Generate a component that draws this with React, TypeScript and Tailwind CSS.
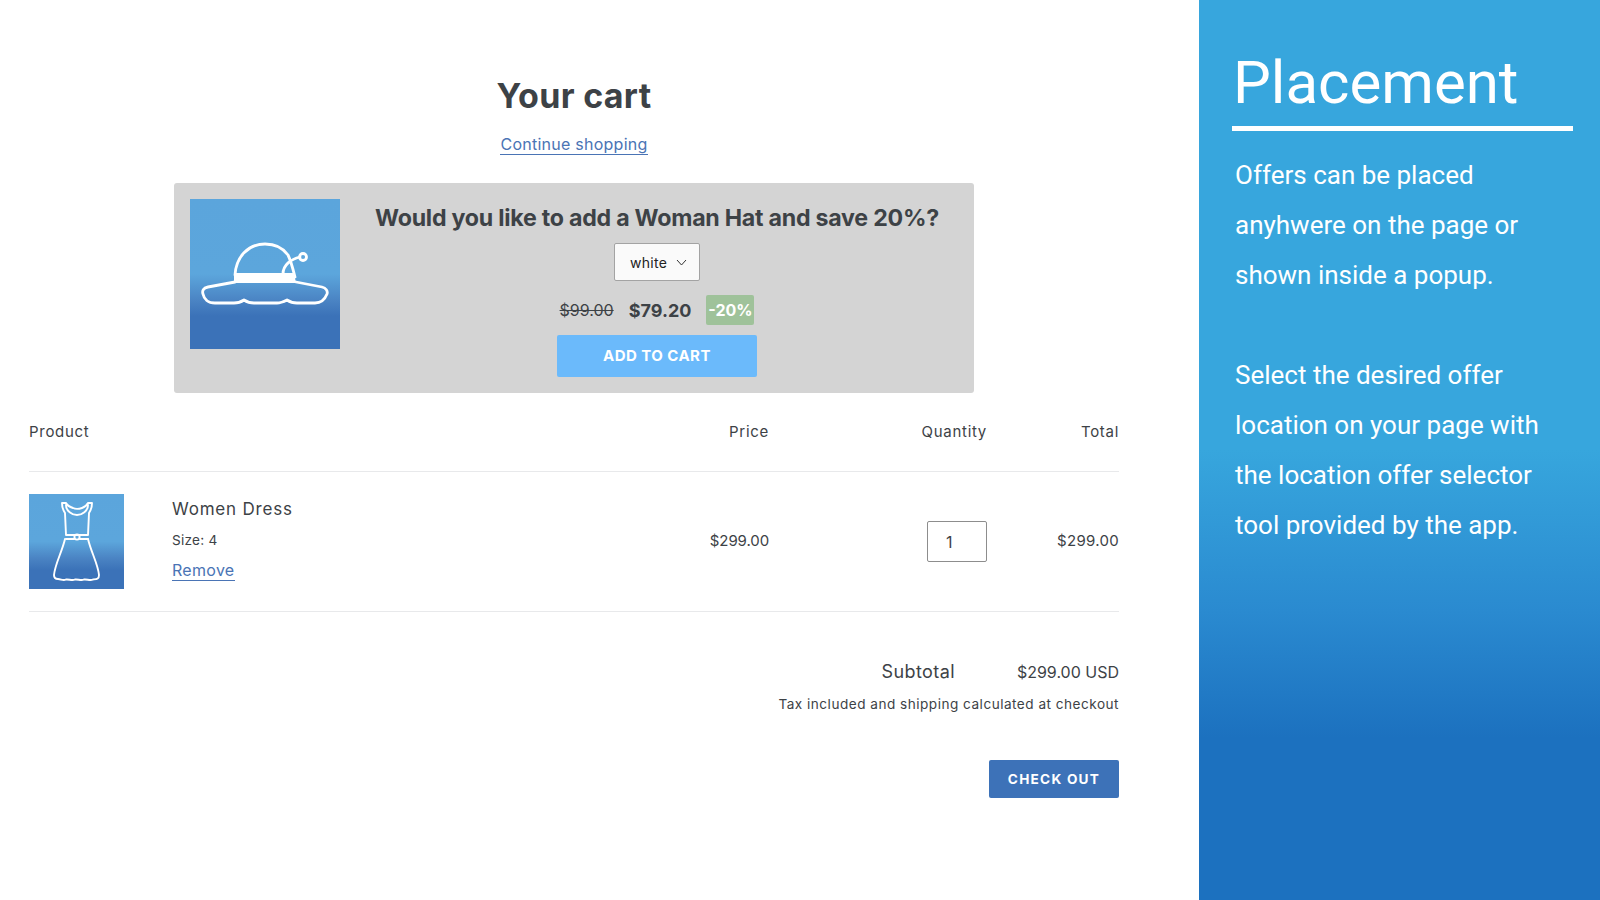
const body = { fontFamily: '"Inter", "Liberation Sans", sans-serif' };

function Hat() {
  return (
    <svg viewBox="0 0 150 150" className="w-full h-full" fill="none" stroke="white" strokeWidth="2.8" strokeLinecap="round" strokeLinejoin="round">
      <path d="M45 76 C46 58 58 45 75 45 C85 45 93 49 98 56 C101 62 103 70 105 78" />
      <path d="M93 75 C93 66 101 60 110 58" />
      <path d="M45 83 L18 88 C13 89 12 92 13 95 C14 100 18 104 25 104 L44 104 C48 104 51 103 54 101 C57 103 60 104 64 104 L87 104 C90 104 93 103 97 101 C100 103 103 104 107 104 L125 104 C131 104 135 100 137 95 C138 92 136 89 132 88 L106 83" />
      <path d="M44 74 H104 L106 84 H44 Z" fill="white" stroke="none" />
      <circle cx="113" cy="58" r="3.5" />
    </svg>
  );
}

function Dress() {
  return (
    <svg viewBox="0 0 95 95" className="w-full h-full" fill="none" stroke="white" strokeWidth="1.9" strokeLinecap="round" strokeLinejoin="round">
      <path d="M33 9 L37 9 C38 11 41 13 44 14 C46 15 50 15 53 14 C56 13 58 11 59 9 L63 9 C63 13 62 16 60 19 L59 41 L37 41 L36 19 C34 16 33 13 33 9 Z" />
      <path d="M37 11 C37 17 43 21 48 21 C53 21 59 17 59 11" />
      <path d="M37 45 H45 M51 45 H59" />
      <circle cx="48" cy="43" r="2.6" />
      <path d="M36 45 C33 58 26 70 25 81 C25 84 26 85 29 85 C32 85 34 87 37 85.5 C40 85 43 87 46 85.5 C49 85 52 87 55 85.5 C58 85 61 87 64 85.5 C68 85 70 85 70 81 C69 70 62 58 59 45" />
    </svg>
  );
}

export default function App() {
  return (
    <div className="flex h-[900px] w-[1600px] overflow-hidden bg-white" style={body}>
      <main className="w-[1199px] pl-[29px] pr-[80px] flex flex-col">
        <h1 className="mt-[75px] text-center text-[34px] leading-[41px] font-bold text-[#3d4246] tracking-[0.3px]">Your cart</h1>
        <div className="mt-[16px] text-center text-[16px] leading-[24px]">
          <a className="text-[#4a74b5] border-b border-[#4a74b5] tracking-[0.25px]">Continue shopping</a>
        </div>
        <section className="ml-[145px] mt-[27px] w-[800px] h-[210px] rounded-[3px] bg-[#d4d4d4] p-[16px] flex">
          <div className="w-[150px] h-[150px] shrink-0 bg-[linear-gradient(180deg,#5ba5dc_0%,#5ca6dc_50%,#4a83c3_68%,#3b72b8_78%,#3b72b8_100%)]">
            <Hat />
          </div>
          <div className="flex-1 pl-[16px] flex flex-col items-center">
            <h2 className="mt-[4px] text-[23.2px] leading-[30px] font-bold text-[#3d4246] tracking-[-0.25px] whitespace-nowrap">Would you like to add a Woman Hat and save 20%?</h2>
            <div className="mt-[10px] w-[86px] h-[38px] rounded-[2px] border border-[#a3a3a3] bg-[#fafafa] flex items-center pl-[15px] gap-[9px] text-[14px] text-[#222]">
              <span className="tracking-[0.3px]">white</span>
              <svg width="11" height="7" viewBox="0 0 11 7" fill="none" stroke="#333" strokeWidth="1"><path d="M1 1 L5.5 6 L10 1" /></svg>
            </div>
            <div className="mt-[14px] flex items-center h-[30px]">
              <span className="text-[16px] line-through text-[#3d4246]">$99.00</span>
              <span className="ml-[15px] text-[18px] font-bold text-[#3d4246]">$79.20</span>
              <span className="ml-[15px] w-[48px] h-[30px] rounded-[2px] bg-[#9fc29a] text-white text-[16px] font-bold flex items-center justify-center">-20%</span>
            </div>
            <div className="mt-[10px] w-[200px] h-[42px] rounded-[2px] bg-[#6bbafb] text-white text-[15px] font-bold flex items-center justify-center tracking-[0.45px]">ADD TO CART</div>
          </div>
        </section>
        <div className="mt-[28px] flex text-[15px] leading-[22px] text-[#3d4246] tracking-[0.7px]">
          <span className="w-[475px]">Product</span>
          <span className="w-[265px] text-right">Price</span>
          <span className="w-[218px] text-right">Quantity</span>
          <span className="flex-1 text-right">Total</span>
        </div>
        <div className="mt-[28px] border-t border-[#e8e9eb] pt-[22px] pb-[22px] flex items-center border-b">
          <div className="w-[95px] h-[95px] shrink-0 bg-[linear-gradient(180deg,#5ba5dc_0%,#5ca6dc_50%,#4a83c3_68%,#3b72b8_80%,#3b72b8_100%)]">
            <Dress />
          </div>
          <div className="ml-[48px] w-[332px] flex flex-col h-[95px]">
            <div className="mt-[3px] text-[17px] leading-[24px] text-[#3d4246] tracking-[0.8px]">Women Dress</div>
            <div className="mt-[9px] text-[13.6px] leading-[20px] text-[#3d4246] tracking-[0.25px]">Size: 4</div>
            <div className="mt-[10px] text-[16px] leading-[21px]"><a className="text-[#4a74b5] border-b border-[#4a74b5] tracking-[0.3px]">Remove</a></div>
          </div>
          <div className="w-[265px] text-right text-[15px] text-[#3d4246] tracking-[-0.1px]">$299.00</div>
          <div className="w-[218px] flex justify-end">
            <div className="w-[60px] h-[41px] rounded-[2px] border border-[#8d8d8d] flex items-center pl-[18px] text-[16px] text-[#3d4246]">1</div>
          </div>
          <div className="flex-1 text-right text-[15px] text-[#3d4246] tracking-[0.3px]">$299.00</div>
        </div>
        <div className="mt-[47px] flex justify-end items-center text-[#3d4246]">
          <span className="text-[18px] leading-[26px] tracking-[0.4px]">Subtotal</span>
          <span className="ml-[62px] text-[16px]">$299.00 USD</span>
        </div>
        <div className="mt-[9px] text-right text-[13.6px] leading-[20px] text-[#3d4246] tracking-[0.49px]">Tax included and shipping calculated at checkout</div>
        <div className="mt-[46px] flex justify-end">
          <div className="w-[130px] h-[38px] rounded-[2px] bg-[#3d72b8] text-white text-[13.6px] font-bold flex items-center justify-center tracking-[1.25px]">CHECK OUT</div>
        </div>
      </main>
      <aside className="flex-1 pl-[33px] pr-[27px] text-white bg-[linear-gradient(180deg,#37a6dd_0%,#37a6dd_50%,#2a8ad0_68%,#1c71bf_82%,#1c71bf_100%)]" style={{ fontFamily: 'Roboto, "Liberation Sans", sans-serif' }}>
        <h2 className="mt-[46px] pl-[1px] text-[60px] leading-[74px] font-normal border-b-[5px] border-white pb-[6px]">Placement</h2>
        <div className="mt-[19px] pl-[3px] text-[26px] leading-[50px] font-normal">
          <p>Offers can be placed<br />anyhwere on the page or<br />shown inside a popup.</p>
          <p className="mt-[50px]">Select the desired offer<br />location on your page with<br />the location offer selector<br />tool provided by the app.</p>
        </div>
      </aside>
    </div>
  );
}
